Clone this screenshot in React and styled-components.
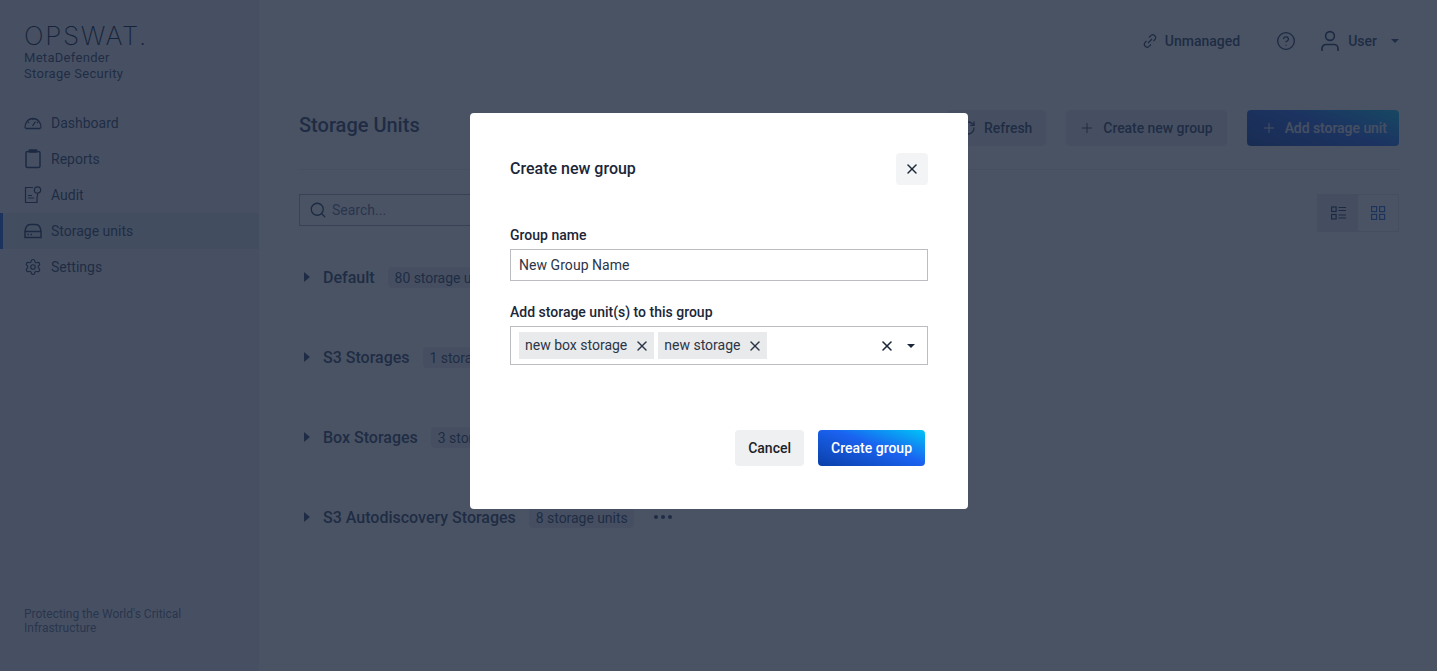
import React from "react";
import styled, { createGlobalStyle } from "styled-components";
import { Settings, CircleHelp, Search, Plus, RotateCw, X } from "lucide-react";

const Global = createGlobalStyle`
  html, body { margin: 0; padding: 0; height: 100%; overflow: hidden; }
  body { font-family: Roboto, "Liberation Sans", sans-serif; color: #3a4c70; background: #fff; }
  * { box-sizing: border-box; }
`;

const Page = styled.div`
  display: grid; grid-template-columns: 259px 1fr; height: 671px;
`;
const Sidebar = styled.aside`
  display: flex; flex-direction: column; background: #eff0f5; padding-top: 22px;
`;
const Brand = styled.div`padding: 0 24px; height: 77px;`;
const LogoText = styled.div`
  font-family: Inter, sans-serif; font-weight: 200; font-size: 26px; line-height: 28px;
  letter-spacing: 1.65px; color: #000f33; white-space: nowrap;
`;
const Product = styled.div`
  font-size: 13px; line-height: 16px; letter-spacing: .3px; color: #2c3f63;
`;
const Nav = styled.nav`display: flex; flex-direction: column; margin-top: 6px;`;
const NavItem = styled.div`
  display: flex; align-items: center; gap: 9px; height: 36px; padding-left: 24px;
  font-size: 14px; color: #2a3d61;
  ${p => p.$active && `
    background: #dde1ea; box-shadow: inset 3px 0 0 #1d5fe0;
  `}
  svg { flex: none; color: #1c2f54; }
`;
const SideFoot = styled.div`
  margin-top: auto; padding: 0 24px 36px; font-size: 12px; line-height: 14px; color: #5a6b8c;
`;

const Main = styled.main`display: flex; flex-direction: column; padding: 0 38px 0 40px;`;
const TopBar = styled.header`
  display: flex; align-items: center; justify-content: flex-end; height: 82px; font-size: 14px;
  font-weight: 500; color: #2a3d61;
  svg { color: #1c2f54; }
`;
const Managed = styled.div`display: flex; align-items: center; gap: 8px; margin-right: 36px;`;
const UserBox = styled.div`
  display: flex; align-items: center; margin-left: 24px; gap: 8px;
`;
const Caret = styled.span`
  display: inline-block; width: 0; height: 0; border-left: 4px solid transparent; border-right: 4px solid transparent;
  border-top: 4px solid ${p => p.$color || "#2c3f63"}; margin-left: ${p => p.$gap || 0}px;
`;
const TitleRow = styled.div`
  display: flex; align-items: center; justify-content: space-between; height: 36px; margin-top: 28px;
`;
const Title = styled.h1`margin: 0 0 6px; font-size: 20px; font-weight: 500; color: #2a3d61;`;
const Actions = styled.div`display: flex; gap: 20px;`;
const GhostBtn = styled.button`
  display: flex; align-items: center; gap: 8px; height: 36px; padding: 0 14px 0 13px; border: 0; border-radius: 4px;
  background: #e9ebef; color: #2a3d61; font: 500 14px Roboto, sans-serif; letter-spacing: -.05px;
`;
const PrimaryTop = styled.button`
  display: flex; align-items: center; gap: 8px; height: 36px; padding: 0 12px 0 14px; border: 0; border-radius: 4px;
  background: linear-gradient(20deg, #0b3fa8 0%, #1a62f0 55%, #00c4f7 100%); color: #e8ebf2;
  font: 500 14px Roboto, sans-serif; letter-spacing: -.05px;
`;
const Divider = styled.hr`margin: 23px 0 24px; border: 0; border-top: 1px solid #e6e8ec; height: 0;`;
const FilterRow = styled.div`display: flex; justify-content: space-between; align-items: flex-start; height: 38px;`;
const SearchBox = styled.div`
  display: flex; align-items: center; gap: 5px; width: 420px; height: 32px; padding-left: 9px;
  border: 1px solid #a0aabc; font-size: 14px; color: #5a6b8c;
  svg { color: #1c2f54; }
`;
const Toggle = styled.div`display: flex; height: 38px; border: 1px solid #e3e5ea;`;
const ToggleBtn = styled.div`
  display: flex; align-items: center; justify-content: center; width: 40px;
  background: ${p => (p.$on ? "#e3e5ea" : "transparent")}; color: ${p => (p.$on ? "#1c2f54" : "#1d5fe0")};
`;
const Groups = styled.div`display: flex; flex-direction: column; margin-top: 5px; margin-left: 5px;`;
const GroupRow = styled.div`display: flex; align-items: center; height: 80px;`;
const TriRight = styled.span`
  width: 0; height: 0; border-top: 5px solid transparent; border-bottom: 5px solid transparent;
  border-left: 6px solid #2c3f63; margin-right: 13px;
`;
const GroupName = styled.span`font-size: 16px; font-weight: 500; color: #2a3d61;`;
const Badge = styled.span`
  margin-left: 13px; padding: 0 6px 0 7px; height: 21px; line-height: 22px; background: #e8eaee; border-radius: 4px;
  font-size: 14px; letter-spacing: -.05px; color: #2a3d61; white-space: nowrap;
`;
const Dots = styled.span`
  display: flex; gap: 3px; margin-left: 20px;
  i { width: 4px; height: 4px; border-radius: 50%; background: #2c3f63; }
`;

const Overlay = styled.div`
  position: fixed; inset: 0; background: rgba(29, 40, 61, .8);
  display: flex; justify-content: center; align-items: flex-start; padding: 113px 0 0 1px;
`;
const Modal = styled.div`
  width: 498px; height: 396px; background: #fff; border-radius: 4px; padding: 40px 40px 43px;
  display: flex; flex-direction: column; color: #1b2638;
`;
const ModalHead = styled.div`display: flex; align-items: center; justify-content: space-between; height: 32px;`;
const ModalTitle = styled.h2`margin: 0 0 2px; font-size: 16px; font-weight: 500; color: #1b2638;`;
const CloseBtn = styled.button`
  display: flex; align-items: center; justify-content: center; width: 32px; height: 32px; padding: 0; border: 0;
  border-radius: 4px; background: #f3f4f6; color: #1b2638;
`;
const Label = styled.label`
  display: block; font-size: 14px; font-weight: 500; line-height: 16px; margin-bottom: 6px; color: #1b2638;
`;
const Field = styled.div`margin-top: ${p => p.$top}px;`;
const TextInput = styled.div`
  display: flex; align-items: center; height: 32px; padding-left: 8px; border: 1px solid #bcbdc1;
  font-size: 14px; letter-spacing: .05px; color: #2b3547;
`;
const MultiSelect = styled.div`
  display: flex; align-items: center; height: 39px; padding: 0 12px 0 8px; border: 1px solid #bcbdc1; gap: 4px;
`;
const Tag = styled.span`
  display: flex; align-items: center; gap: 7px; height: 27px; padding: 0 4px 1px 6px; background: #e9eaec;
  font-size: 14px; color: #2b3547;
  svg { margin-top: 1px; }
`;
const SelectTools = styled.div`display: flex; align-items: center; margin-left: auto; gap: 12px;`;
const Footer = styled.div`display: flex; justify-content: flex-end; gap: 14px; margin-top: auto; padding-right: 3px;`;
const CancelBtn = styled.button`
  height: 36px; padding: 0 13px 1px; border: 0; border-radius: 4px; background: #eff0f2; color: #1b1f2a;
  font: 500 14px Roboto, sans-serif;
`;
const CreateBtn = styled.button`
  height: 36px; padding: 0 13px 1px; border: 0; border-radius: 4px; color: #fff;
  background: linear-gradient(20deg, #0b3fa8 0%, #1a62f0 55%, #00c4f7 100%);
  font: 500 14px Roboto, sans-serif;
`;

const Gauge = () => (
  <svg width="18" height="18" viewBox="0 0 18 18" fill="none" stroke="currentColor" strokeWidth="1.3">
    <path d="M1.500 14.500h15M1 14.300C.6 9 4 4.500 9 4.500s8.400 4.500 8 9.800" /><path d="M8.500 12l3-4.500M4 8l1 1M9 4.500V6M14 8l-1 1" />
  </svg>
);
const Clip = () => (
  <svg width="18" height="20" viewBox="0 0 18 20" fill="none" stroke="currentColor" strokeWidth="1.500">
    <rect x="2" y="2.500" width="14" height="16" rx="1.500" /><path d="M5.500 1h7v2h-7z" fill="currentColor" />
  </svg>
);
const AuditIcon = () => (
  <svg width="18" height="20" viewBox="0 0 18 20" fill="none" stroke="currentColor" strokeWidth="1.200">
    <path d="M9 2.500H1.500v15h11.500v-6" /><circle cx="13.500" cy="5" r="3.200" /><path d="M13.500 8.200v3.500M4 10.500h4M4 13h6" />
  </svg>
);
const Drive = () => (
  <svg width="18" height="16" viewBox="0 0 18 16" fill="none" stroke="currentColor" strokeWidth="1.500">
    <path d="M1 9V8.500C1.500 4.500 3 1.500 6 1.500h6c3 0 4.500 3 5 7V9M1 8.500h16v6H1z" /><path d="M3.500 11.500h1.500M6.500 11.500h1.500" />
  </svg>
);
const Unlink = () => (
  <svg width="14" height="14" viewBox="0 0 14 14" fill="none" stroke="currentColor" strokeWidth="1.200">
    <path d="M6 3.500l1.500-1.500a2.500 2.500 0 0 1 4.500 3.500L10.500 7M8 10.500L6.500 12A2.500 2.500 0 0 1 2 8.500L3.500 7" />
    <path d="M5 9l4-4" />
  </svg>
);
const UserIcon = () => (
  <svg width="20" height="22" viewBox="0 0 20 22" fill="none" stroke="currentColor" strokeWidth="1.600">
    <circle cx="10" cy="6" r="4.400" /><path d="M2 21v-2.500a4 4 0 0 1 4-4h8a4 4 0 0 1 4 4V21" />
  </svg>
);
const ListIcon = () => (
  <svg width="15" height="14" viewBox="0 0 15 14" fill="none" stroke="currentColor" strokeWidth="1.200">
    <rect x=".6" y="1" width="4.500" height="4.500" /><rect x=".6" y="8.500" width="4.500" height="4.500" />
    <path d="M7.500 1.500H15M7.500 4.500H15M7.500 9H15M7.500 12H15" />
  </svg>
);
const GridIcon = () => (
  <svg width="15" height="14" viewBox="0 0 15 14" fill="none" stroke="currentColor" strokeWidth="1.200">
    <rect x=".6" y=".6" width="5" height="5" /><rect x="8.600" y=".6" width="5" height="5" />
    <rect x=".6" y="8.400" width="5" height="5" /><rect x="8.600" y="8.400" width="5" height="5" />
  </svg>
);

const nav = [
  { label: "Dashboard", icon: <Gauge /> },
  { label: "Reports", icon: <Clip /> },
  { label: "Audit", icon: <AuditIcon /> },
  { label: "Storage units", icon: <Drive />, active: true },
  { label: "Settings", icon: <Settings size={18} strokeWidth={1.5} /> },
];
const groups = [
  { name: "Default", count: "80 storage units" },
  { name: "S3 Storages", count: "1 storage unit" },
  { name: "Box Storages", count: "3 storage units" },
  { name: "S3 Autodiscovery Storages", count: "8 storage units" },
];

export default function App() {
  return (
    <>
      <Global />
      <Page>
        <Sidebar>
          <Brand>
            <LogoText>OPSWAT.</LogoText>
            <Product>MetaDefender<br />Storage Security</Product>
          </Brand>
          <Nav>
            {nav.map(n => (
              <NavItem key={n.label} $active={n.active}>{n.icon}{n.label}</NavItem>
            ))}
          </Nav>
          <SideFoot>Protecting the World's Critical<br />Infrastructure</SideFoot>
        </Sidebar>
        <Main>
          <TopBar>
            <Managed><Unlink />Unmanaged</Managed>
            <CircleHelp size={20} strokeWidth={1.6} />
            <UserBox><UserIcon />User<Caret $gap={6} /></UserBox>
          </TopBar>
          <TitleRow>
            <Title>Storage Units</Title>
            <Actions>
              <GhostBtn><RotateCw size={16} />Refresh</GhostBtn>
              <GhostBtn><Plus size={16} strokeWidth={1.5} />Create new group</GhostBtn>
              <PrimaryTop><Plus size={16} strokeWidth={1.5} />Add storage unit</PrimaryTop>
            </Actions>
          </TitleRow>
          <Divider />
          <FilterRow>
            <SearchBox><Search size={18} strokeWidth={1.7} />Search...</SearchBox>
            <Toggle>
              <ToggleBtn $on><ListIcon /></ToggleBtn>
              <ToggleBtn><GridIcon /></ToggleBtn>
            </Toggle>
          </FilterRow>
          <Groups>
            {groups.map(g => (
              <GroupRow key={g.name}>
                <TriRight /><GroupName>{g.name}</GroupName><Badge>{g.count}</Badge>
                <Dots><i /><i /><i /></Dots>
              </GroupRow>
            ))}
          </Groups>
        </Main>
      </Page>
      <Overlay>
        <Modal>
          <ModalHead>
            <ModalTitle>Create new group</ModalTitle>
            <CloseBtn aria-label="Close"><X size={16} strokeWidth={2.1} /></CloseBtn>
          </ModalHead>
          <Field $top={42}>
            <Label>Group name</Label>
            <TextInput>New Group Name</TextInput>
          </Field>
          <Field $top={23}>
            <Label>Add storage unit(s) to this group</Label>
            <MultiSelect>
              <Tag>new box storage<X size={16} strokeWidth={2.1} /></Tag>
              <Tag>new storage<X size={16} strokeWidth={2.1} /></Tag>
              <SelectTools><X size={16} strokeWidth={2.3} /><Caret $color="#1b2638" /></SelectTools>
            </MultiSelect>
          </Field>
          <Footer>
            <CancelBtn>Cancel</CancelBtn>
            <CreateBtn>Create group</CreateBtn>
          </Footer>
        </Modal>
      </Overlay>
    </>
  );
}
